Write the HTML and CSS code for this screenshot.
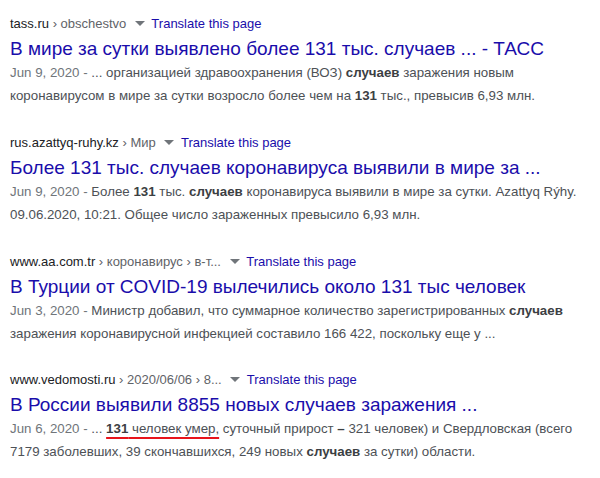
FILE: index.html
```html
<!DOCTYPE html>
<html lang="en">

<head>
    <meta charset="UTF-8">
    <meta name="viewport" content="width=device-width, initial-scale=1.0">
    <title>Search results</title>
    <link rel="stylesheet" href="styles.css">
</head>

<body>

    <div class="results">
        <div class="result">
            <div class="url">
                <span class="host">tass.ru</span><span class="crumbs"> › obschestvo</span>
                <span class="arrow"></span>
                <a class="translate" href="#">Translate this page</a>
            </div>
            <a class="title" href="#">В мире за сутки выявлено более 131 тыс. случаев ... - ТАСС</a>
            <div class="snippet">
                <span class="date">Jun 9, 2020 - </span>... организацией здравоохранения (ВОЗ) <b>случаев</b> заражения новым<br>
                коронавирусом в мире за сутки возросло более чем на <b>131</b> тыс., превысив 6,93 млн.
            </div>
        </div>

        <div class="result">
            <div class="url">
                <span class="host">rus.azattyq-ruhy.kz</span><span class="crumbs"> › Мир</span>
                <span class="arrow"></span>
                <a class="translate" href="#">Translate this page</a>
            </div>
            <a class="title" href="#">Более 131 тыс. случаев коронавируса выявили в мире за ...</a>
            <div class="snippet">
                <span class="date">Jun 9, 2020 - </span>Более <b>131</b> тыс. <b>случаев</b> коронавируса выявили в мире за сутки. Azattyq Rýhy.<br>
                09.06.2020, 10:21. Общее число зараженных превысило 6,93 млн.
            </div>
        </div>

        <div class="result">
            <div class="url">
                <span class="host">www.aa.com.tr</span><span class="crumbs"> › коронавирус › в-т...</span>
                <span class="arrow"></span>
                <a class="translate" href="#">Translate this page</a>
            </div>
            <a class="title" href="#">В Турции от COVID-19 вылечились около 131 тыс человек</a>
            <div class="snippet">
                <span class="date">Jun 3, 2020 - </span>Министр добавил, что суммарное количество зарегистрированных <b>случаев</b><br>
                заражения коронавирусной инфекцией составило 166 422, поскольку еще у ...
            </div>
        </div>

        <div class="result">
            <div class="url">
                <span class="host">www.vedomosti.ru</span><span class="crumbs"> › 2020/06/06 › 8...</span>
                <span class="arrow"></span>
                <a class="translate" href="#">Translate this page</a>
            </div>
            <a class="title" href="#">В России выявили 8855 новых случаев заражения ...</a>
            <div class="snippet">
                <span class="date">Jun 6, 2020 - </span>... <span class="marked"><b>131</b> человек умер,</span> суточный прирост <b>–</b> 321 человек) и Свердловская (всего<br>
                7179 заболевших, 39 скончавшихся, 249 новых <b>случаев</b> за сутки) области.
            </div>
        </div>
    </div>

</body>

</html>
```

FILE: styles.css
```css
body,
html {
    margin: 0;
    padding: 0;
    background: #fff;
}

body {
    font-family: "Liberation Sans", Arial, sans-serif;
    overflow: hidden;
}

.results {
    padding: 14px 10px 0;
}

.result {
    margin-bottom: 25.8px;
}

.result:last-child {
    margin-bottom: 0;
}

.url {
    font-size: 13px;
    line-height: 20px;
    white-space: nowrap;
}

.host {
    color: #202124;
}

.crumbs {
    color: #5f6368;
}

.arrow {
    display: inline-block;
    width: 0;
    height: 0;
    margin: 0 3px 2px 5px;
    border-left: 5px solid transparent;
    border-right: 5px solid transparent;
    border-top: 5px solid #70757a;
    vertical-align: middle;
}

.translate {
    color: #1a0dab;
    text-decoration: none;
}

.title {
    display: block;
    margin-top: 3px;
    font-size: 19px;
    line-height: 24px;
    color: #1a0dab;
    text-decoration: none;
    white-space: nowrap;
}

.snippet {
    font-size: 13.3px;
    line-height: 23px;
    color: #4d5156;
    white-space: nowrap;
}

.snippet b {
    color: #3c4043;
}

.date {
    color: #70757a;
}

.marked {
    text-decoration: underline;
    text-decoration-color: #e8141b;
    text-decoration-thickness: 2px;
    text-underline-offset: 4px;
}
```
